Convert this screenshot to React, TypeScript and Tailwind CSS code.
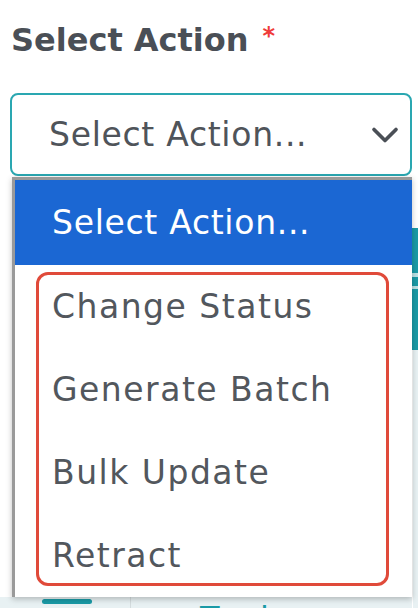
import { ChevronDown } from "lucide-react";

const options = ["Change Status", "Generate Batch", "Bulk Update", "Retract"];

export default function App() {
    return (
        <div className="relative w-[418px] h-[608px] overflow-hidden bg-white font-['DejaVu_Sans',sans-serif]">
            {/* form field */}
            <div className="pt-[20px] px-[10px]">
                <label className="flex items-start gap-[14px] pl-[1px] text-[32px] leading-[40px] font-semibold text-[#4a4f56]">
                    Select Action
                    <span className="text-[24px] leading-[32px] text-[#ef3b3b]">*</span>
                </label>
                <div className="mt-[33px] flex items-center justify-between h-[83px] w-[402px] rounded-lg border-2 border-[#2aa7b1] pl-[37px] pr-[3px]">
                    <span className="text-[33px] tracking-[0.7px] text-[#4f545a]">Select Action...</span>
                    <ChevronDown className="w-[44px] h-[44px] text-[#4a4f56]" strokeWidth={2} />
                </div>
            </div>

            {/* page content behind the menu */}
            <div className="mt-[52px] flex h-[380px]">
                <div className="flex-1 flex flex-col">
                    <div className="flex-1 bg-white" />
                    <div className="flex h-[11px] bg-[#e8f1f3]">
                        <div className="w-[130px] pl-[42px] pt-[2px]">
                            <div className="h-[5px] w-[50px] rounded-full bg-[#1a9aa6]" />
                        </div>
                        <div className="border-l border-[#d4dcde] pl-[69px] pt-[1px] text-[32px] leading-[40px] text-[#1a9aa6]">Twelve</div>
                    </div>
                </div>
                <div className="w-[6px] flex flex-col">
                    <div className="h-[122px] bg-[#1a9aa6] flex flex-col pt-[45px] gap-[9px]">
                        <div className="h-[4px] bg-white/70" />
                        <div className="h-[3px] bg-white/70" />
                    </div>
                    <div className="flex-1 bg-[#e8f1f3] border-l border-white" />
                </div>
            </div>

            {/* open dropdown menu */}
            <div className="absolute left-[12px] top-[177px] w-[400px] bg-white border-l-[3px] border-t-[3px] border-[#9a9a9a] shadow-[0_2px_6px_rgba(0,0,0,0.25)]">
                <div className="h-[85px] flex items-center pl-[37px] bg-[#1b67d3] text-[33px] tracking-[0.7px] text-white">
                    Select Action...
                </div>
                {options.map((o) => (
                    <div key={o} className="h-[83px] flex items-center pl-[37px] text-[33px] tracking-[1.5px] text-[#52575d]">
                        {o}
                    </div>
                ))}
            </div>

            {/* highlight */}
            <div className="absolute left-[36px] top-[272px] w-[353px] h-[314px] rounded-xl border-[3px] border-[#e04a3a]" />
        </div>
    );
}
